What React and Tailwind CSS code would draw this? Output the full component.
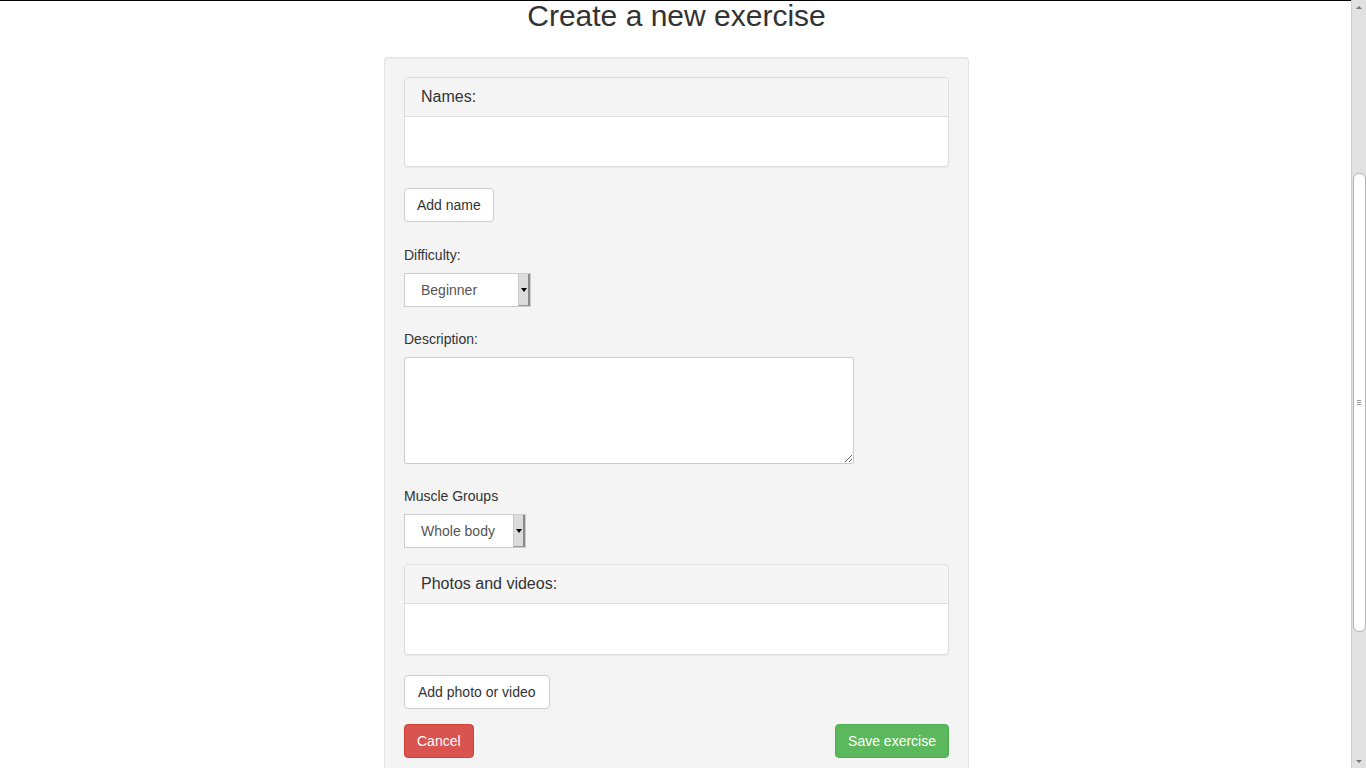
const Panel = ({ title, body = 'h-[49px]' }) => (
  <div className="rounded-[4px] border border-[#ddd] bg-white shadow-[0_1px_1px_rgba(0,0,0,0.05)]">
    <div className="h-[39px] rounded-t-[3px] border-b border-[#ddd] bg-[#f5f5f5] px-[16px] flex items-center text-[16px] text-[#333]">
      {title}
    </div>
    <div className={body} />
  </div>
);

const Select = ({ value, width }) => (
  <div className={`flex h-[34px] border border-[#ccc] bg-white ${width}`}>
    <div className="flex-1 flex items-center pl-[16px] text-[14px] text-[#555]">{value}</div>
    <div className="w-[12px] flex items-center justify-center bg-[#dcdcdc] border-l border-[#c8c8c8] border-r-2 border-r-[#8a8a8a] border-b border-b-[#9a9a9a]">
      <span className="block w-0 h-0 border-l-[3px] border-r-[3px] border-t-[4px] border-l-transparent border-r-transparent border-t-black" />
    </div>
  </div>
);

const Button = ({ children, className }) => (
  <button className={`h-[34px] rounded-[4px] border text-[14px] ${className}`}>{children}</button>
);

const Scrollbar = () => (
  <div className="w-[15px] h-[768px] bg-[#e1e1e1] border-l border-[#d0d0d0] flex flex-col items-center">
    <div className="h-[14px] w-full flex items-center justify-center">
      <span className="block w-0 h-0 border-l-[3px] border-r-[3px] border-b-[3px] border-l-transparent border-r-transparent border-b-[#777]" />
    </div>
    <div className="mt-[159px] h-[459px] w-[13px] rounded-[6px] bg-white border border-[#b5b5b5] flex flex-col items-center justify-center gap-[1px]">
      <span className="block w-[4px] h-px bg-[#999]" />
      <span className="block w-[4px] h-px bg-[#999]" />
      <span className="block w-[4px] h-px bg-[#999]" />
    </div>
    <div className="mt-auto h-[14px] w-full flex items-center justify-center">
      <span className="block w-0 h-0 border-l-[3px] border-r-[3px] border-t-[3px] border-l-transparent border-r-transparent border-t-[#777]" />
    </div>
  </div>
);

export default function App() {
  return (
    <div className="flex h-[768px] overflow-hidden bg-white font-['Liberation_Sans',Arial,sans-serif] text-[#333]">
      <div className="flex-1 border-t border-black flex flex-col items-center">
        <h2 className="text-[30px] leading-[33px] -mt-[2px] ml-[2px] text-[#333]">Create a new exercise</h2>
        <div className="mt-[25px] ml-[2px] w-[585px] flex-1 rounded-t-[4px] border border-b-0 border-[#e3e3e3] bg-[#f4f4f4] shadow-[inset_0_1px_1px_rgba(0,0,0,0.05)] px-[19px] pt-[19px]">
          <Panel title="Names:" />
          <Button className="mt-[21px] px-[12px] bg-white border-[#ccc] text-[#333]">Add name</Button>
          <div className="mt-[23px] text-[14px] leading-[20px]">Difficulty:</div>
          <div className="mt-[8px]">
            <Select value="Beginner" width="w-[127px]" />
          </div>
          <div className="mt-[22px] text-[14px] leading-[20px]">Description:</div>
          <textarea
            readOnly
            className="mt-[8px] block w-[450px] h-[107px] border border-[#ccc] rounded-[2px] bg-white resize"
          />
          <div className="mt-[22px] text-[14px] leading-[20px]">Muscle Groups</div>
          <div className="mt-[8px]">
            <Select value="Whole body" width="w-[122px]" />
          </div>
          <div className="mt-[16px]">
            <Panel title="Photos and videos:" body="h-[50px]" />
          </div>
          <Button className="mt-[20px] px-[13px] bg-white border-[#ccc] text-[#333]">Add photo or video</Button>
          <div className="mt-[15px] flex justify-between">
            <Button className="px-[12px] bg-[#d9534f] border-[#d43f3a] text-white">Cancel</Button>
            <Button className="px-[12px] bg-[#5cb85c] border-[#4cae4c] text-white">Save exercise</Button>
          </div>
        </div>
      </div>
      <Scrollbar />
    </div>
  );
}
